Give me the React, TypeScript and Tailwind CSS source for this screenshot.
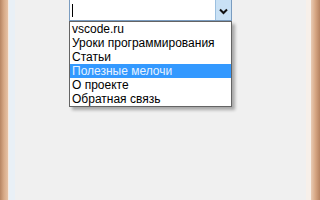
import React from 'react';

const items = [
  'vscode.ru',
  'Уроки программирования',
  'Статьи',
  'Полезные мелочи',
  'О проекте',
  'Обратная связь',
];

export default function App() {
  const selected = 3;

  return (
    <div className="flex h-[200px] w-[320px] overflow-hidden font-['Liberation_Sans',Arial,sans-serif]">
      <div className="w-[8px] bg-gradient-to-r from-[#b78563] via-[#d8aa88] to-[#e6c2a6]" />
      <div className="w-[1px] bg-[#f6ebe3]" />
      <div className="w-[6px] bg-[#e9f0f6]" />

      <div className="flex-1 bg-[#f0f0f0]">
        <div className="relative -mt-[3px] ml-[54px] w-[163px]">
          <div className="flex h-[24px] border border-[#7a9cc0] bg-white">
            <div className="flex flex-1 items-center pl-[2px]">
              <span className="mt-[3px] h-[13px] w-[1px] bg-black" />
            </div>
            <div className="flex w-[16px] items-center justify-center border-l border-[#9cc0e0] bg-[#c9e1f5]">
              <svg width="9" height="7" viewBox="0 0 9 7" className="mt-[4px]">
                <path d="M1 1.5 L4.5 5 L8 1.5" fill="none" stroke="#111" strokeWidth="2" />
              </svg>
            </div>
          </div>

          <div className="absolute left-0 top-[24px] w-[163px] border border-[#646464] bg-white shadow-[3px_3px_3px_rgba(0,0,0,0.3)]">
            <ul>
              {items.map((item, i) => (
                <li
                  key={item}
                  className={
                    i === selected
                      ? 'h-[14px] bg-[#3399ff] pl-[2px] text-[12px] leading-[14px] text-[#e6f2ff]'
                      : 'h-[14px] pl-[2px] text-[12px] leading-[14px] text-black'
                  }
                >
                  {item}
                </li>
              ))}
            </ul>
          </div>
        </div>
      </div>

      <div className="w-[5px] bg-[#f7f0ea]" />
      <div className="w-[9px] bg-gradient-to-r from-[#e8cbb4] via-[#d6a683] to-[#b58260]" />
    </div>
  );
}
